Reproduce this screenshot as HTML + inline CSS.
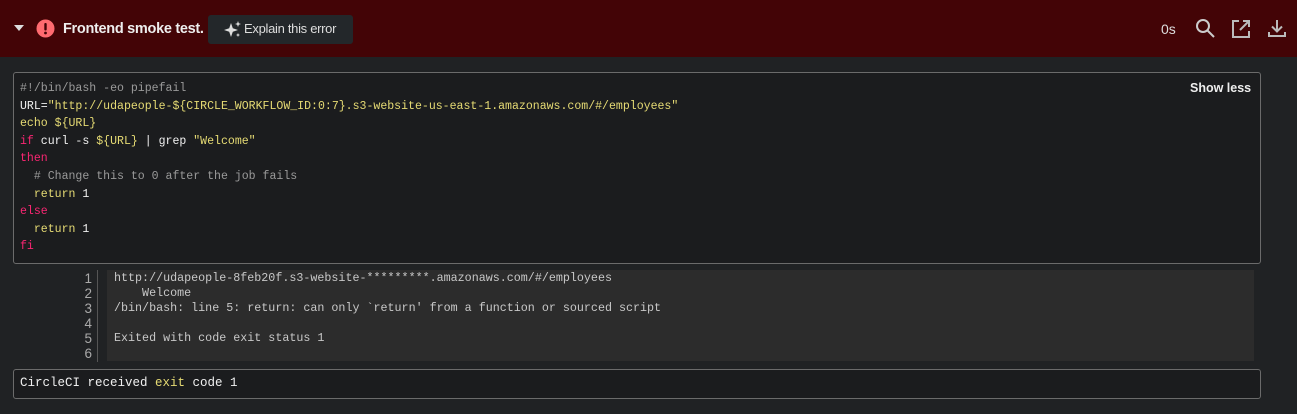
<!DOCTYPE html>
<html><head><meta charset="utf-8"><style>
body{margin:0;width:1297px;height:414px;background:#202224;font-family:"Liberation Sans",sans-serif;overflow:hidden;position:relative}
.hdr{position:absolute;left:0;top:0;width:1297px;height:57px;background:#430406}
.abs{position:absolute}
.code{position:absolute;left:13px;top:72px;width:1246px;height:190px;border:1px solid #6b6b6b;border-radius:3px;background:#1b1c1e}
pre{margin:0;font-family:"Liberation Mono",monospace;font-size:11.55px;line-height:17.6px;color:#f0f0f0;white-space:pre}
.y{color:#e6db74}.p{color:#f92672}.c{color:#9a9a9a}
.out{position:absolute;left:107px;top:270px;width:1147px;height:91px;background:#2c2c2c}
.ln{position:absolute;left:70px;top:271px;width:22px;text-align:right;font-family:"Liberation Sans",sans-serif;font-size:13.5px;line-height:15px;color:#aaa}
.sep{position:absolute;left:97px;top:270px;width:1px;height:92px;background:#555}
.out pre{font-size:11.7px;line-height:15px;color:#c8c8c8;padding:1px 0 0 7px}
.bot{position:absolute;left:13px;top:369px;width:1246px;height:28px;border:1px solid #6b6b6b;border-radius:3px;background:#1b1c1e}
</style></head><body>
<div class="hdr">
 <svg class="abs" style="left:14px;top:25px" width="10" height="6"><path d="M0 0L10 0L5 6Z" fill="#ddd"/></svg>
 <svg class="abs" style="left:36px;top:19px" width="19" height="19"><circle cx="9.5" cy="9.5" r="9" fill="#ff6b70"/><rect x="8.3" y="4" width="2.4" height="7.5" rx="1" fill="#430406"/><circle cx="9.5" cy="14" r="1.4" fill="#430406"/></svg>
 <div class="abs" style="left:63px;top:21px;color:#eee;font-weight:bold;font-size:14.5px;letter-spacing:-0.3px">Frontend smoke test.</div>
 <div class="abs" style="left:208px;top:15px;width:145px;height:29px;background:#23272a;border-radius:3px"></div>
 <svg class="abs" style="left:224px;top:21px" width="18" height="18" fill="#ddd"><path d="M7 2L8.8 7.2 14 9 8.8 10.8 7 16 5.2 10.8 0 9 5.2 7.2Z"/><path d="M14 0L14.8 2.2 17 3 14.8 3.8 14 6 13.2 3.8 11 3 13.2 2.2Z"/><path d="M14 12L14.6 13.4 16 14 14.6 14.6 14 16 13.4 14.6 12 14 13.4 13.4Z"/></svg>
 <div class="abs" style="left:244px;top:21px;color:#ddd;font-size:13px;letter-spacing:-0.3px">Explain this error</div>
 <div class="abs" style="left:1161px;top:21px;color:#ddd;font-size:14px">0s</div>
 <svg class="abs" style="left:1195px;top:18px" width="22" height="22" fill="none" stroke="#ccc" stroke-width="2"><circle cx="8" cy="8" r="6"/><path d="M12.5 12.5L19 19"/></svg>
 <svg class="abs" style="left:1231px;top:19px" width="20" height="20" fill="none" stroke="#bbb" stroke-width="2"><path d="M8 2H2V18H18V12"/><path d="M12 2H18V8M18 2L9 11"/></svg>
 <svg class="abs" style="left:1267px;top:18px" width="20" height="20" fill="none" stroke="#bbb" stroke-width="2"><path d="M10 2V13M5 8.5L10 13.5 15 8.5"/><path d="M2 14V18H18V14"/></svg>
</div>
<div class="code">
<pre style="position:absolute;left:6px;top:7px"><span class="c">#!/bin/bash -eo pipefail</span>
URL=<span class="y">"http://udapeople-${CIRCLE_WORKFLOW_ID:0:7}.s3-website-us-east-1.amazonaws.com/#/employees"</span>
<span class="y">echo ${URL}</span>
<span class="p">if</span> curl -s <span class="y">${URL}</span> | grep <span class="y">"Welcome"</span>
<span class="p">then</span>
  <span class="c"># Change this to 0 after the job fails</span>
  <span class="y">return</span> 1
<span class="p">else</span>
  <span class="y">return</span> 1
<span class="p">fi</span></pre>
<div class="abs" style="left:1176px;top:8px;color:#eee;font-weight:bold;font-size:12.5px">Show less</div>
</div>
<div class="ln">1<br>2<br>3<br>4<br>5<br>6</div>
<div class="sep"></div>
<div class="out"><pre>http://udapeople-8feb20f.s3-website-*********.amazonaws.com/#/employees
    Welcome
/bin/bash: line 5: return: can only `return' from a function or sourced script

Exited with code exit status 1</pre></div>
<div class="bot"><pre style="position:absolute;left:6px;top:5px;font-size:12.5px">CircleCI received <span class="y">exit</span> code 1</pre></div>
</body></html>
